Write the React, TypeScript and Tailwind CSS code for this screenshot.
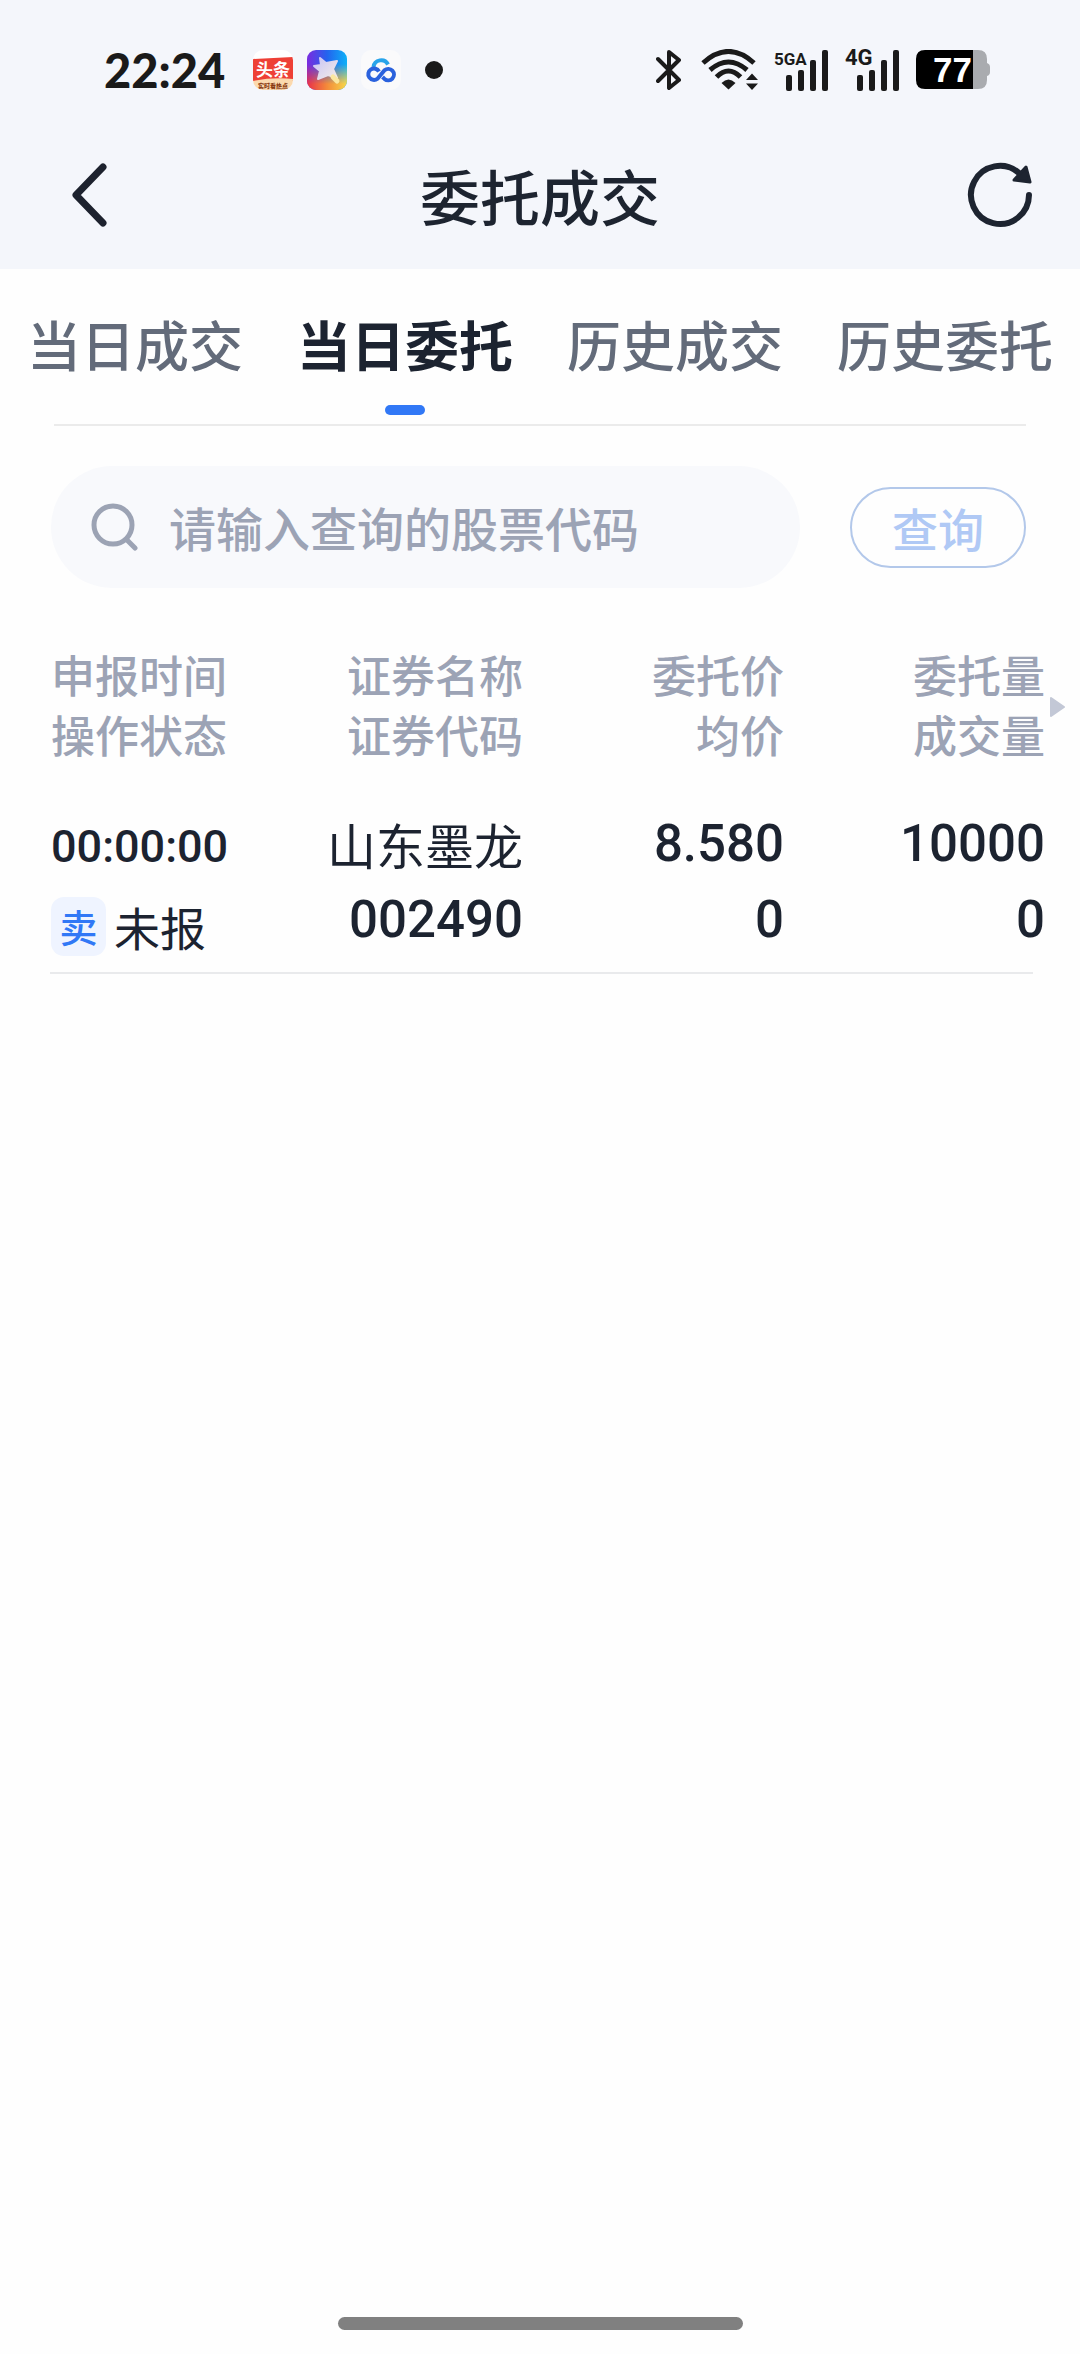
import { useState } from 'react';

const tabs = ['当日成交', '当日委托', '历史成交', '历史委托'];

const columns = [
  ['申报时间', '操作状态'],
  ['证券名称', '证券代码'],
  ['委托价', '均价'],
  ['委托量', '成交量'],
];

const orders = [
  {
    time: '00:00:00',
    side: '卖',
    status: '未报',
    name: '山东墨龙',
    code: '002490',
    price: '8.580',
    average: '0',
    amount: '10000',
    filled: '0',
  },
];

function NewsIcon() {
  return (
    <svg width="40" height="40" viewBox="0 0 40 40">
      <defs>
        <clipPath id="news-clip">
          <rect width="40" height="40" rx="10" />
        </clipPath>
      </defs>
      <g clipPath="url(#news-clip)">
        <rect width="40" height="40" fill="#fff" />
        <path d="M0 9 40 7V31H0Z" fill="#ee4036" />
        <path d="M0 31Q20 27 40 29V40H0Z" fill="#fbd9ae" />
        <text
          x="20"
          y="26"
          textAnchor="middle"
          fill="#fff"
          className="font-['Noto_Sans_CJK_SC',sans-serif] text-[17px] font-bold"
        >
          头条
        </text>
        <text
          x="20"
          y="38"
          textAnchor="middle"
          fill="#8a3b12"
          className="font-['Noto_Sans_CJK_SC',sans-serif] text-[6px] font-black"
        >
          实时看热点
        </text>
      </g>
    </svg>
  );
}

function WandIcon() {
  return (
    <svg width="40" height="40" viewBox="0 0 40 40">
      <defs>
        <linearGradient id="wand-bg" x1="0" y1="0" x2="1" y2="0">
          <stop offset="0" stopColor="#7a2be0" />
          <stop offset="0.5" stopColor="#2463ee" />
          <stop offset="1" stopColor="#0cb0f8" />
        </linearGradient>
        <linearGradient id="wand-warm" x1="0" y1="0" x2="1" y2="0">
          <stop offset="0" stopColor="#e8304a" />
          <stop offset="0.5" stopColor="#f48a3a" />
          <stop offset="1" stopColor="#f6d94a" />
        </linearGradient>
        <linearGradient id="wand-fade" x1="0" y1="0" x2="0" y2="1">
          <stop offset="0.35" stopColor="#000" />
          <stop offset="0.85" stopColor="#fff" />
        </linearGradient>
        <linearGradient id="wand-star" x1="0" y1="0" x2="1" y2="1">
          <stop offset="0" stopColor="#c9c4f6" />
          <stop offset="1" stopColor="#f3ece6" />
        </linearGradient>
        <mask id="wand-mask">
          <rect width="40" height="40" fill="url(#wand-fade)" />
        </mask>
      </defs>
      <rect width="40" height="40" rx="9" fill="url(#wand-bg)" />
      <rect width="40" height="40" rx="9" fill="url(#wand-warm)" mask="url(#wand-mask)" />
      <path
        d="M13 8 19 13 30 11 26 19 30 28 21 25 11 29 13 21 7 16 14 15Z"
        fill="url(#wand-star)"
        stroke="url(#wand-star)"
        strokeWidth="2"
        strokeLinejoin="round"
      />
      <path d="M26 27 30 31" stroke="#fbe7a0" strokeWidth="5" strokeLinecap="round" />
    </svg>
  );
}

function CloudIcon() {
  return (
    <svg width="40" height="40" viewBox="0 0 40 40" fill="none">
      <rect width="40" height="40" rx="10" fill="#fafafb" />
      <path d="M12.500 17A7.700 7.700 0 0 1 27 14.500" stroke="#28a4ea" strokeWidth="4" />
      <path
        d="M18 21.500A5.700 5.700 0 1 0 16.500 28.700L23.500 20.300A5.700 5.700 0 1 1 23.500 28.900L21.500 27"
        stroke="#2b62dd"
        strokeWidth="4"
        strokeLinejoin="round"
      />
    </svg>
  );
}

function BluetoothIcon() {
  return (
    <svg width="26" height="42" viewBox="0 0 26 42" fill="none" className="mr-1">
      <path
        d="M2 10 23 31 13 39V3L23 11 2 32"
        stroke="#1a1a1a"
        strokeWidth="4"
        strokeLinecap="round"
        strokeLinejoin="round"
      />
    </svg>
  );
}

function WifiIcon() {
  return (
    <svg width="58" height="42" viewBox="0 0 58 42" fill="none">
      <g stroke="#1a1a1a" strokeWidth="5">
        <path d="M2 14Q27.500 -9 53 14" />
        <path d="M9 21Q27.500 5 46 21" />
        <path d="M15.500 28Q27.500 16 39.500 28" />
      </g>
      <g fill="#1a1a1a">
        <path d="M20.500 34Q27.500 27 34.500 34L27.500 40.500Z" />
        <path d="M51 24.500 57 31H45ZM51 41 57 34.500H45Z" />
      </g>
    </svg>
  );
}

function SignalIcon({ label, small }: { label: string; small?: boolean }) {
  return (
    <svg width="56" height="42" viewBox="0 0 56 42" fill="#1a1a1a" className="overflow-visible">
      <text
        x="0"
        y="16"
        className={
          small
            ? 'font-[Roboto,sans-serif] text-[17px] font-bold'
            : 'font-[Roboto,sans-serif] text-[22px] font-bold'
        }
      >
        {label}
      </text>
      <rect x="12" y="26" width="6" height="16" rx="2" />
      <rect x="24" y="21" width="6" height="21" rx="2" />
      <rect x="36" y="11" width="6" height="31" rx="2" />
      <rect x="48" y="1" width="6" height="41" rx="2" />
    </svg>
  );
}

function BatteryIcon() {
  return (
    <svg width="74" height="40" viewBox="0 0 74 40">
      <path d="M57 0H62Q71 0 71 9V13Q74 14 74 17V22Q74 25 71 26V30Q71 39 62 39H57Z" fill="#a9abaf" />
      <path d="M57 0H9Q0 0 0 9V30Q0 39 9 39H57Z" fill="#000" />
      <text x="17" y="32" fill="#fff" className="font-['Liberation_Sans',sans-serif] text-[35px] font-bold">
        77
      </text>
    </svg>
  );
}

function StatusBar() {
  return (
    <div className="flex h-[120px] items-center justify-between pt-5 pr-[90px] pl-[104px]">
      <div className="flex items-center gap-[14px]">
        <span className="mr-[14px] font-[Lato,sans-serif] text-[47px] leading-none font-black text-[#1a1a1a]">
          22:24
        </span>
        <NewsIcon />
        <WandIcon />
        <CloudIcon />
        <span className="ml-[10px] size-[18px] rounded-full bg-[#1a1a1a]" />
      </div>
      <div className="flex items-center gap-[15px]">
        <BluetoothIcon />
        <WifiIcon />
        <SignalIcon label="5GA" small />
        <SignalIcon label="4G" />
        <BatteryIcon />
      </div>
    </div>
  );
}

function TitleBar() {
  return (
    <div className="flex h-[149px] items-center px-[46px]">
      <button type="button" aria-label="返回" className="flex w-[68px] justify-end">
        <svg width="48" height="68" viewBox="0 0 48 68" fill="none">
          <path
            d="M37 6 10 34 37 62"
            stroke="#1d222e"
            strokeWidth="7"
            strokeLinecap="round"
            strokeLinejoin="round"
          />
        </svg>
      </button>
      <h1 className="flex-1 text-center text-[60px] leading-[80px] font-medium text-[#1d2430]">委托成交</h1>
      <button type="button" aria-label="刷新">
        <svg width="68" height="68" viewBox="0 0 68 68" fill="none">
          <path
            d="M63 34A29 29 0 1 1 53 12"
            stroke="#1d2430"
            strokeWidth="6"
            strokeLinecap="round"
          />
          <path d="M60 6 64 21 48 19Z" fill="#1d2430" stroke="#1d2430" strokeWidth="3" strokeLinejoin="round" />
        </svg>
      </button>
    </div>
  );
}

export default function App() {
  const [activeTab, setActiveTab] = useState('当日委托');
  const [code, setCode] = useState('');

  return (
    <div className="flex min-h-screen w-full flex-col bg-[#fefefe] font-['Noto_Sans_CJK_SC',sans-serif]">
      <header className="bg-[#f4f6fb]">
        <StatusBar />
        <TitleBar />
      </header>

      {/* Tabs */}
      <nav className="grid grid-cols-4 pt-[35px]">
        {tabs.map((tab) => (
          <button
            key={tab}
            type="button"
            onClick={() => setActiveTab(tab)}
            className={`flex flex-col items-center pb-[9px] text-[54px] leading-[80px] whitespace-nowrap ${
              tab === activeTab ? 'font-bold text-[#1c2330]' : 'font-medium text-[#636b7a]'
            }`}
          >
            {tab}
            <span
              className={`mt-[21px] h-[10px] w-10 rounded-full ${tab === activeTab ? 'bg-[#3178f6]' : ''}`}
            />
          </button>
        ))}
      </nav>
      <hr className="mx-[54px] border-t-2 border-[#ebebeb]" />

      {/* Search */}
      <form
        className="mt-10 flex items-center gap-[50px] pr-[54px] pl-[51px]"
        onSubmit={(e) => e.preventDefault()}
      >
        <label className="flex h-[122px] min-w-0 flex-1 items-center gap-[30px] rounded-full bg-[#f8f9fc] px-10">
          <svg width="48" height="48" viewBox="0 0 48 48" fill="none" className="shrink-0">
            <g stroke="#9ca3b4" strokeWidth="5" strokeLinecap="round">
              <circle cx="22" cy="22" r="19" />
              <path d="M36 37 44 45" />
            </g>
          </svg>
          <input
            type="text"
            aria-label="股票代码"
            placeholder="请输入查询的股票代码"
            value={code}
            onChange={(e) => setCode(e.target.value)}
            className="w-full min-w-0 bg-transparent text-[47px] leading-[70px] font-medium text-[#1c2330] outline-none placeholder:text-[#9ca3b5]"
          />
        </label>
        <button
          type="submit"
          className="h-[81px] w-[176px] rounded-full border-2 border-[#b3c8ea] text-[46px] leading-[70px] font-medium text-[#b0c9f5]"
        >
          查询
        </button>
      </form>

      {/* Orders */}
      <div className="relative mt-14 pr-[35px] pl-[51px]">
        <table className="w-full table-fixed text-right">
          <colgroup>
            <col />
            <col className="w-[261px]" />
            <col className="w-[261px]" />
            <col className="w-[261px]" />
          </colgroup>
          <thead>
            <tr>
              {columns.map(([top, bottom]) => (
                <th
                  key={top}
                  className="p-0 text-[44px] leading-[60px] font-medium whitespace-nowrap text-[#9ca3b5] first:text-left"
                >
                  <div>{top}</div>
                  <div>{bottom}</div>
                </th>
              ))}
            </tr>
          </thead>
          <tbody className="font-[Roboto,'Noto_Sans_CJK_SC',sans-serif] text-[51px] leading-[76px] font-medium text-[#1c2330]">
            {orders.map((order) => (
              <tr key={order.code} className="align-top">
                <td className="pt-[42px] text-left">
                  <div className="text-[45px] leading-[82px]">{order.time}</div>
                  <div className="flex h-[76px] items-center gap-2 font-['Noto_Sans_CJK_SC',sans-serif]">
                    <span className="flex h-[59px] w-[55px] items-center justify-center rounded-[13px] bg-[#eff4ff] text-[38px] text-[#3178f6]">
                      {order.side}
                    </span>
                    <span className="text-[46px] font-normal">{order.status}</span>
                  </div>
                </td>
                <td className="pt-[42px]">
                  <div className="font-['Noto_Sans_CJK_SC',sans-serif] text-[49px] font-normal whitespace-nowrap">
                    {order.name}
                  </div>
                  <div>{order.code}</div>
                </td>
                <td className="pt-[42px]">
                  <div>{order.price}</div>
                  <div>{order.average}</div>
                </td>
                <td className="pt-[42px]">
                  <div>{order.amount}</div>
                  <div>{order.filled}</div>
                </td>
              </tr>
            ))}
          </tbody>
        </table>
        {/* more columns to the right */}
        <svg
          width="15"
          height="20"
          viewBox="0 0 15 20"
          className="absolute top-[53px] right-[15px]"
        >
          <path d="M1 1 14 10 1 19Z" fill="#c3c8d6" stroke="#c3c8d6" strokeWidth="2" strokeLinejoin="round" />
        </svg>
      </div>
      <hr className="mt-2 mr-[47px] ml-[50px] border-t-2 border-[#e9eaec]" />

      <div className="mx-auto mt-auto mb-6 h-[13px] w-3/8 rounded-full bg-[#808080]" />
    </div>
  );
}
